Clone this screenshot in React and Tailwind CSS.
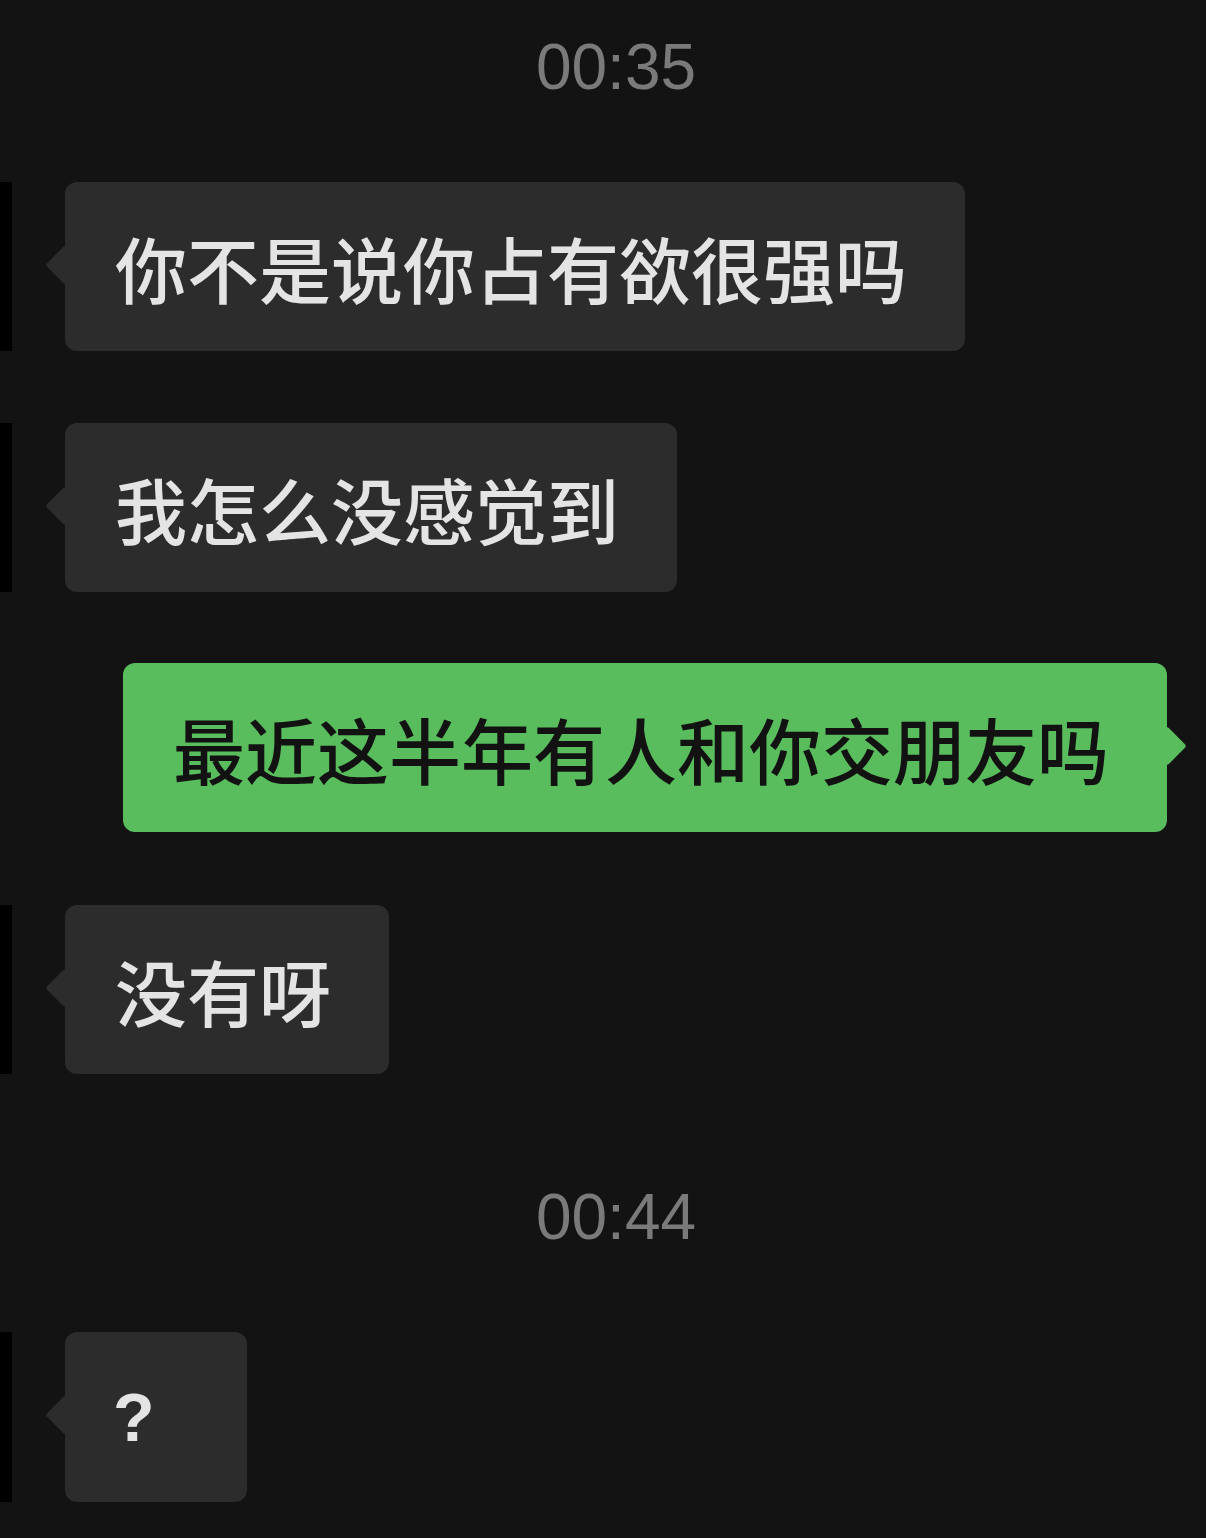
import React from 'react';

const cjk = { fontFamily: '"Noto Sans CJK SC", "Noto Sans", sans-serif' };

const TimeStamp = ({ text, className }) => (
  <div
    className={`flex justify-center pl-[26px] text-[64px] leading-none text-[#7a7a7a] ${className}`}
    style={{ fontFamily: '"Liberation Sans", Arial, sans-serif' }}
  >
    {text}
  </div>
);

const LeftBubble = ({ text, className = '' }) => (
  <div className={`flex items-stretch ${className}`}>
    <div className="w-[12px] bg-black" />
    <div className="relative ml-[53px] flex h-[169px] items-center rounded-[12px] bg-[#2c2c2c] pl-[50px] pr-[58px]">
      <div className="absolute left-[-14px] top-[69px] h-[28px] w-[28px] rotate-45 rounded-[3px] bg-[#2c2c2c]" />
      <span className="relative text-[72px] font-medium leading-none text-[#e4e4e4]" style={cjk}>
        {text}
      </span>
    </div>
  </div>
);

export default function App() {
  return (
    <div className="flex min-h-[1538px] w-[1206px] flex-col bg-[#131313]">
      <TimeStamp text="00:35" className="mt-[35px]" />

      <LeftBubble text="你不是说你占有欲很强吗" className="mt-[83px]" />
      <LeftBubble text="我怎么没感觉到" className="mt-[72px]" />

      <div className="mt-[71px] flex justify-end pr-[39px]">
        <div className="relative flex h-[169px] items-center rounded-[12px] bg-[#59bd5d] pl-[50px] pr-[58px]">
          <div className="absolute right-[-14px] top-[69px] h-[28px] w-[28px] rotate-45 rounded-[3px] bg-[#59bd5d]" />
          <span className="relative text-[72px] font-medium leading-none text-[#121212]" style={cjk}>
            最近这半年有人和你交朋友吗
          </span>
        </div>
      </div>

      <LeftBubble text="没有呀" className="mt-[73px]" />

      <TimeStamp text="00:44" className="mt-[111px]" />

      <div className="mt-[83px] flex items-stretch">
        <div className="w-[12px] bg-black" />
        <div className="relative ml-[53px] flex h-[170px] w-[182px] items-center rounded-[12px] bg-[#2c2c2c] pl-[48px]">
          <div className="absolute left-[-14px] top-[69px] h-[28px] w-[28px] rotate-45 rounded-[3px] bg-[#2c2c2c]" />
          <span
            className="relative text-[68px] font-bold leading-none text-[#e4e4e4]"
            style={{ fontFamily: '"Liberation Sans", Arial, sans-serif' }}
          >
            ?
          </span>
        </div>
      </div>
    </div>
  );
}
